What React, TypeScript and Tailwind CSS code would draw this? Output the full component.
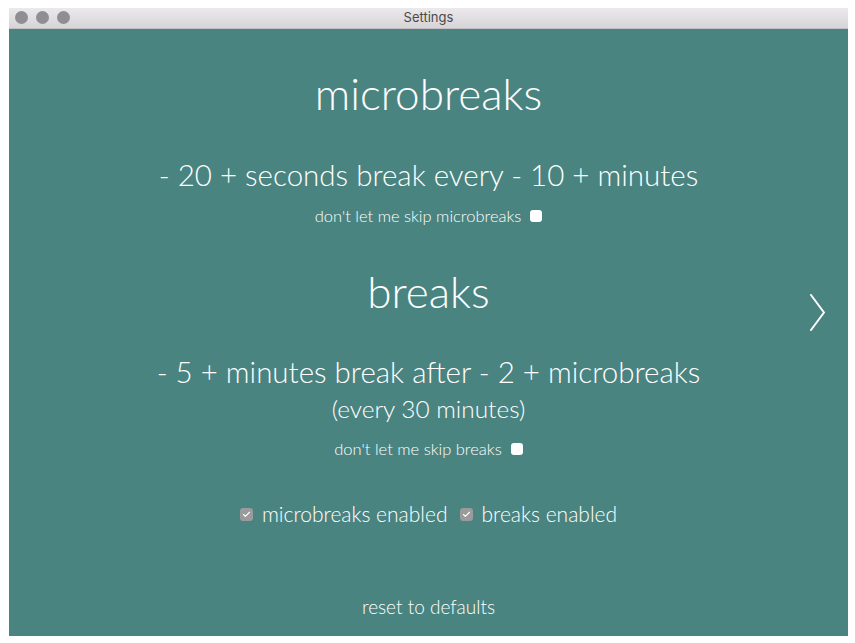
import { Check } from 'lucide-react';

function Counter({ value }: { value: number }) {
  return (
    <span>
      - {value} +
    </span>
  );
}

function Box({ checked }: { checked?: boolean }) {
  if (checked) {
    return (
      <span className="inline-flex h-[13px] w-[13px] items-center justify-center rounded-[3px] bg-[#9b9a9c]">
        <Check className="h-[9px] w-[9px] text-white" strokeWidth={3} />
      </span>
    );
  }
  return <span className="inline-block h-[12px] w-[12px] rounded-[3px] bg-white" />;
}

export default function App() {
  return (
    <div className="min-h-[643px] bg-white pl-[9px] pt-[8px]">
      <div className="flex h-[628px] w-[839px] flex-col overflow-hidden">
        {/* title bar */}
        <div className="relative flex h-[21px] items-center justify-center border-b border-[#c2c0c2] bg-gradient-to-b from-[#ebe9eb] to-[#d6d4d6]">
          <div className="absolute left-[6px] top-[3px] flex gap-[8px]">
            <span className="h-[13px] w-[13px] rounded-full bg-[#8f8e92]" />
            <span className="h-[13px] w-[13px] rounded-full bg-[#8f8e92]" />
            <span className="h-[13px] w-[13px] rounded-full bg-[#8f8e92]" />
          </div>
          <span className="font-['Inter','Noto_Sans',sans-serif] text-[13px] text-[#4a4a4a]">Settings</span>
        </div>

        {/* content */}
        <div className="relative flex flex-1 flex-col items-center bg-[#4a8481] font-['Lato_Light','Lato',sans-serif] font-light text-white">
          <h1 className="mt-[38px] text-[44px] leading-[52px] font-light">microbreaks</h1>

          <div className="mt-[39px] text-[29.5px] leading-[34px]">
            <Counter value={20} /> seconds break every <Counter value={10} /> minutes
          </div>

          <label className="mt-[14px] flex items-center gap-[9px] text-[16.5px] leading-[20px]">
            don't let me skip microbreaks
            <Box />
          </label>

          <h1 className="mt-[39px] text-[44px] leading-[52px] font-light">breaks</h1>

          <div className="mt-[38px] text-[29.5px] leading-[34px]">
            <Counter value={5} /> minutes break after <Counter value={2} /> microbreaks
          </div>
          <div className="mt-[5px] text-[24.4px] leading-[30px]">(every 30 minutes)</div>

          <label className="mt-[15px] flex items-center gap-[9px] text-[16.5px] leading-[20px]">
            don't let me skip breaks
            <Box />
          </label>

          <div className="mt-[41px] flex items-center text-[21px] leading-[28px]">
            <label className="flex items-center gap-[9px]">
              <Box checked />
              microbreaks enabled
            </label>
            <label className="ml-[12px] flex items-center gap-[9px]">
              <Box checked />
              breaks enabled
            </label>
          </div>

          <button className="mt-[67px] text-[19px] leading-[24px] text-white">reset to defaults</button>

          <button className="absolute right-[22px] top-[265px]" aria-label="next">
            <svg width="17" height="37" viewBox="0 0 17 37" fill="none">
              <polyline points="2,1 15,18.5 2,36" stroke="white" strokeWidth="2" strokeLinecap="round" strokeLinejoin="round" />
            </svg>
          </button>
        </div>
      </div>
    </div>
  );
}
